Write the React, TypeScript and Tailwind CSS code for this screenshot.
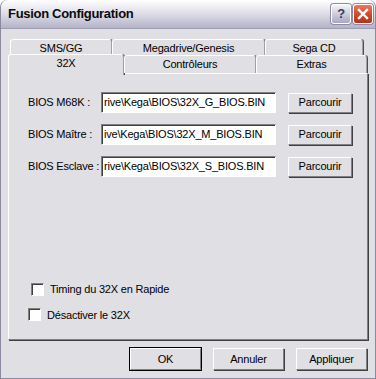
import React from "react";

const tabBase =
  "flex items-center justify-center border-t border-l border-white border-r border-r-[#a0a0a0] shadow-[1px_0_0_#505050] rounded-t-[3px] bg-[#e0dfe3]";

function BiosRow({ label, path }: { label: string; path: string }) {
  return (
    <div className="flex items-center h-[21px]">
      <span className="w-[73px] whitespace-nowrap">{label}</span>
      <div className="w-[175px] h-[21px] bg-white border-t border-l border-[#808080] border-r border-b border-r-white border-b-white shadow-[inset_1px_1px_0_#404040] flex items-center pl-[2px] overflow-hidden whitespace-nowrap">
        {path}
      </div>
      <button className="ml-[12px] w-[64px] h-[20px] flex items-center justify-center border-t border-l border-white border-r border-b border-r-[#808080] border-b-[#808080] shadow-[1px_1px_0_#404040] bg-[#e0dfe3]">
        Parcourir
      </button>
    </div>
  );
}

function Check({ label, className }: { label: string; className: string }) {
  return (
    <div className={"flex items-center " + className}>
      <span className="w-[13px] h-[13px] bg-white border-t border-l border-[#808080] border-r border-b border-r-white border-b-white shadow-[inset_1px_1px_0_#404040]" />
      <span className="ml-[6px]">{label}</span>
    </div>
  );
}

function Btn({ label, primary }: { label: string; primary?: boolean }) {
  return (
    <button
      className={
        "w-[71px] h-[22px] flex items-center justify-center bg-[#e0dfe3] border-t border-l border-white border-r border-b border-r-[#808080] border-b-[#808080] " +
        (primary
          ? "outline outline-1 outline-[#000] shadow-[1px_1px_0_#404040]"
          : "shadow-[1px_1px_0_#404040]")
      }
    >
      {label}
    </button>
  );
}

export default function App() {
  return (
    <div className="w-[376px] h-[379px] bg-[#e0dfe3] flex flex-col font-['Liberation_Sans',Arial,sans-serif] text-[11px] tracking-[-0.2px] text-black border border-[#8a89a0] border-t-0 rounded-t-[7px] overflow-hidden">
      <div className="h-[29px] shrink-0 flex items-center pl-[7px] pr-[2px] bg-gradient-to-b from-[#ffffff] via-[#dddce7] to-[#b4b3c8] border-b border-[#9e9db3] rounded-t-[7px]">
        <span className="font-bold text-[13px] text-[#0b0b0b] tracking-[-0.3px]">Fusion Configuration</span>
        <div className="ml-auto flex gap-[2px]">
          <div className="w-[20px] h-[20px] rounded-[3px] border border-white bg-gradient-to-b from-[#f4f4f9] to-[#a9a8c0] shadow-[0_0_0_1px_#8d8ca4] flex items-center justify-center text-[#3a3a5c] font-bold text-[13px]">
            ?
          </div>
          <div className="w-[20px] h-[20px] rounded-[3px] border border-white bg-gradient-to-b from-[#ea7a5e] via-[#d14a2c] to-[#b8301a] shadow-[0_0_0_1px_#8d8ca4] flex items-center justify-center">
            <svg width="12" height="12" viewBox="0 0 12 12">
              <path d="M2 2 L10 10 M10 2 L2 10" stroke="white" strokeWidth="2.4" strokeLinecap="square" />
            </svg>
          </div>
        </div>
      </div>

      <div className="flex flex-col">
        <div className="mt-[10px] ml-[9px] flex h-[17px]">
          <div className={tabBase + " w-[102px]"}>SMS/GG</div>
          <div className={tabBase + " w-[153px]"}>Megadrive/Genesis</div>
          <div className={tabBase + " w-[98px]"}>Sega CD</div>
        </div>
        <div className="ml-[7px] flex items-end h-[19px] -mb-[2px] relative z-10">
          <div className={tabBase + " w-[116px] h-[21px] pb-[4px]"}>32X</div>
          <div className={tabBase + " w-[132px] h-[18px] mb-[2px]"}>Contrôleurs</div>
          <div className={tabBase + " w-[111px] h-[18px] mb-[2px]"}>Extras</div>
        </div>
        <div className="ml-[7px] w-[360px] h-[267px] border-t border-l border-white border-r border-b border-r-[#808080] border-b-[#808080] shadow-[1px_1px_0_#404040] flex flex-col pl-[19px] pt-[18px]">
          <div className="flex flex-col gap-[11px]">
            <BiosRow label="BIOS M68K :" path="rive\Kega\BIOS\32X_G_BIOS.BIN" />
            <BiosRow label="BIOS Maître :" path="ive\Kega\BIOS\32X_M_BIOS.BIN" />
            <BiosRow label="BIOS Esclave :" path="rive\Kega\BIOS\32X_S_BIOS.BIN" />
          </div>
          <Check label="Timing du 32X en Rapide" className="mt-[104px] ml-[3px]" />
          <Check label="Désactiver le 32X" className="mt-[9px]" />
        </div>
        <div className="mt-[8px] mr-[8px] flex justify-end gap-[12px]">
          <Btn label="OK" primary />
          <Btn label="Annuler" />
          <Btn label="Appliquer" />
        </div>
      </div>
    </div>
  );
}
